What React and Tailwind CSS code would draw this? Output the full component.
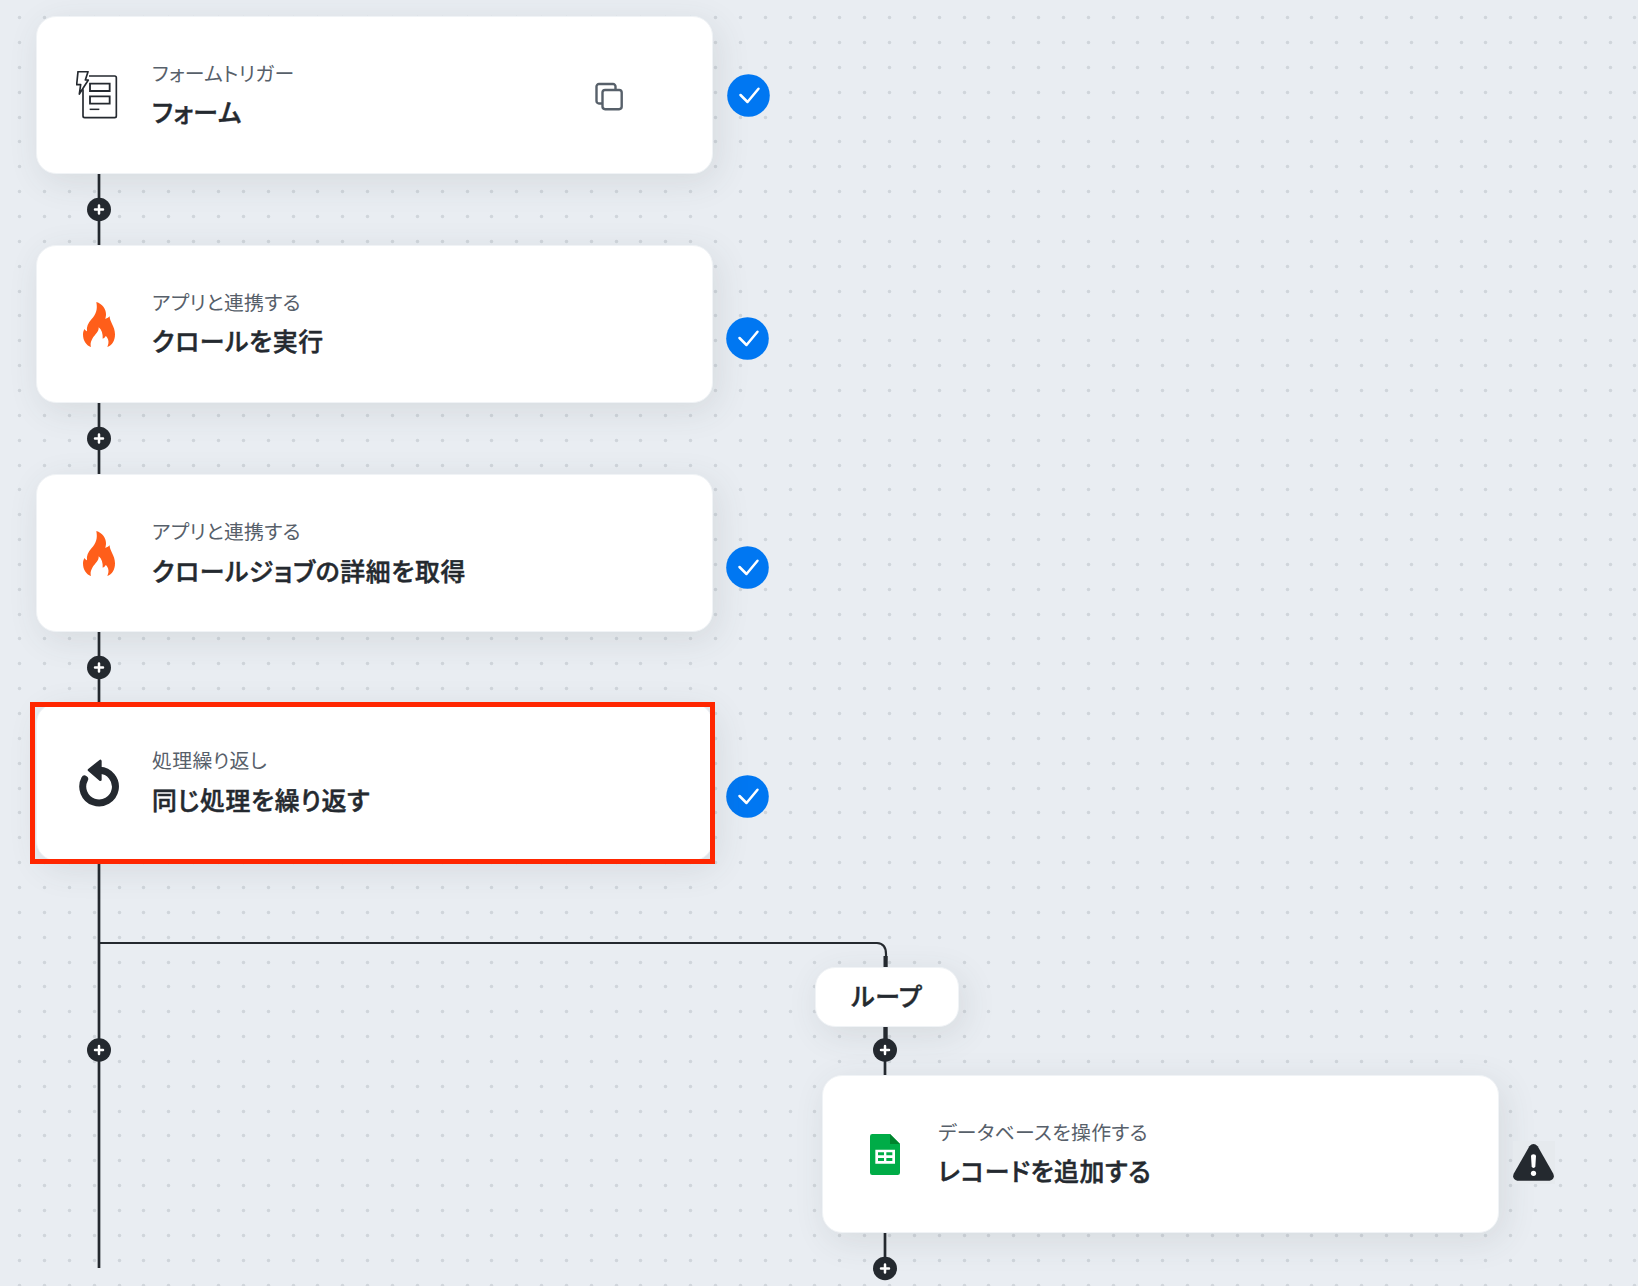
import clsx from "clsx";

const DOT_GAP = 24.85;

// Dots snap to whole pixels so every one of them stays crisp
const dotPath = () => {
  let d = "";
  for (let row = 0; row < 52; row++) {
    for (let col = 0; col < 66; col++) {
      const x = Math.round(19.2 + col * DOT_GAP) + 0.5;
      const y = Math.round(17.2 + row * DOT_GAP) + 0.5;
      d += `M${x} ${y}h.01`;
    }
  }
  return d;
};

const DotGrid = () => (
  <svg className="absolute inset-0 h-full w-full" aria-hidden="true">
    <path d={dotPath()} stroke="#d0d5db" strokeWidth="3.600" strokeLinecap="round" />
  </svg>
);

const FormIcon = () => (
  <svg
    className="-mt-0.5 -ml-1"
    width="42"
    height="48"
    viewBox="229 213 126 144"
    fill="none"
    stroke="#24292f"
    strokeWidth="5"
  >
    <path d="M268 228H345Q350 228 350 233V348Q350 353 345 353H255Q250 353 250 348V268" />
    <path d="M271 251H330V273H271ZM271 289H330V311H271Z" strokeWidth="5.500" />
    <path d="M270 328H299" strokeWidth="4.500" />
    <path d="M235 215H265L257 240H266L239 282L243 254H231Z" strokeLinejoin="round" />
  </svg>
);

const FlameIcon = () => (
  <svg width="32" height="45" viewBox="249 216 96 135" fill="#ff5e1a">
    <path d="M289 216C307 222 318 236 318 252C318 258 317 262 316 267C322 265 326 262 329 259C328 273 345 290 345 313C345 333 336 346 322 351C325 344 327 336 324 328C322 323 320 320 317 318C315 322 312 325 308 326C309 312 305 299 296 292C297 306 285 313 277 326C271 336 271 344 273 351C258 346 249 332 249 313C249 306 251 300 254 297C256 301 258 303 261 304C259 290 264 279 275 267C289 252 293 238 289 216Z" />
  </svg>
);

const LoopIcon = () => (
  <svg width="40" height="48" viewBox="237 237 120 144" fill="none" stroke="#24292f">
    <path d="M254 297A49 49 0 1 0 299 271" strokeWidth="21" strokeLinecap="round" />
    <path d="M267 270L301 243V299Z" fill="#24292f" strokeWidth="8" strokeLinejoin="round" />
  </svg>
);

const SheetIcon = () => (
  <svg width="30" height="41" viewBox="210 222 90 123">
    <path
      d="M217 222H270L300 252V338Q300 345 293 345H217Q210 345 210 338V229Q210 222 217 222Z"
      fill="#00ac47"
    />
    <path d="M270 222L300 252H270Z" fill="#00832d" />
    <path
      d="M226 269H285V311H226ZM234 277V286H252V277ZM259 277V286H277V277ZM234 294V303H252V294ZM259 294V303H277V294Z"
      fill="#fff"
      fillRule="evenodd"
    />
  </svg>
);

const CopyIcon = () => (
  <svg
    className="mt-1"
    width="30"
    height="30"
    viewBox="0 0 30 30"
    fill="none"
    stroke="#57606a"
    strokeWidth="2.400"
  >
    <path d="M8 21.500H5A2.500 2.500 0 0 1 2.500 19V4.500A2.500 2.500 0 0 1 5 2H19A2.500 2.500 0 0 1 21.500 4.500V8" />
    <rect x="8.500" y="8" width="19.200" height="19.200" rx="2.600" />
  </svg>
);

const CheckBadge = ({ className }) => (
  <svg className={clsx("relative shrink-0", className)} width="43" height="43" viewBox="-21.500 -21.500 43 43">
    <circle r="21.300" fill="#0077f2" />
    <path
      d="M-8 -.5L-1 6.500L10 -6.800"
      fill="none"
      stroke="#fff"
      strokeWidth="2.500"
      strokeLinecap="round"
      strokeLinejoin="round"
    />
  </svg>
);

const WarningIcon = () => (
  <svg className="relative mt-[17px] ml-3.5" width="42" height="43" viewBox="219 243 126 129">
    <rect x="219" y="243" width="126" height="129" fill="#e6eaee" />
    <path d="M268 259Q280.500 245 293 259L340 341Q346 358 329 362.500H232Q215 358 221 341Z" fill="#24292f" />
    <path d="M273 288Q273 283 280.500 283Q288 283 288 288L286 319Q285 324 280.500 324Q276 324 275 319Z" fill="#fff" />
    <circle cx="280.500" cy="340" r="7.800" fill="#fff" />
  </svg>
);

// Vertical line with an add-step button drawn on top of it
const Connector = ({ className, height, buttonY, lineEnd = height, thickUntil = 0 }) => (
  <svg className={clsx("relative shrink-0", className)} width="24" height={height}>
    <path d={`M12 0V${lineEnd}`} stroke="#24292f" strokeWidth="2.700" />
    {thickUntil > 0 && <path d={`M12.600 0V${thickUntil}`} stroke="#24292f" strokeWidth="4.200" />}
    <ellipse cx="12" cy={buttonY} rx="12" ry="11.700" fill="#24292f" />
    <path
      d={`M8 ${buttonY}H16M12 ${buttonY - 4}V${buttonY + 4}`}
      stroke="#fff"
      strokeWidth="2.500"
      strokeLinecap="round"
    />
  </svg>
);

const NodeCard = ({ icon: Icon, label, title, action, selected }) => (
  <div
    className={clsx(
      "relative flex h-[158px] w-[677px] shrink-0 rounded-[20px] border border-[#f0f3f6] bg-white shadow-[5px_8px_34px_rgba(60,75,75,0.11)]",
      selected && "z-10"
    )}
  >
    <div className="flex w-[124px] items-center justify-center pt-px">
      <Icon />
    </div>
    <div className="-ml-[9px] flex flex-1 flex-col pt-[41px]">
      <p className="text-[19.88px] leading-[30px] tracking-[0.35px] text-[#57606a]">{label}</p>
      <p className="mt-[3.350px] text-[24.85px] leading-[40px] font-medium tracking-[0.7px] text-[#24292f] [-webkit-text-stroke:0.5px_#24292f]">
        {title}
      </p>
    </div>
    {action && <div className="mr-[88px] flex items-center">{action}</div>}
    {selected && (
      <div className="absolute -top-0.5 -left-[7px] h-[162px] w-[685px] border-[5px] border-[#ff2600]" />
    )}
  </div>
);

const steps = [
  { icon: FormIcon, label: "フォームトリガー", title: "フォーム", action: <CopyIcon />, badge: "mt-px ml-3.5" },
  { icon: FlameIcon, label: "アプリと連携する", title: "クロールを実行", badge: "mt-7 ml-[13px]" },
  { icon: FlameIcon, label: "アプリと連携する", title: "クロールジョブの詳細を取得", badge: "mt-7 ml-[13px]" },
  { icon: LoopIcon, label: "処理繰り返し", title: "同じ処理を繰り返す", badge: "mt-7 ml-[13px]", selected: true },
];

const App = () => {
  return (
    <div className="relative h-[1286px] w-[1638px] overflow-hidden bg-[#e9edf2] font-['Noto_Sans_CJK_JP',sans-serif] [font-feature-settings:'palt']">
      <DotGrid />

      <div className="relative flex flex-col pt-4 pl-9">
        {steps.map(({ badge, ...step }, index) => (
          <div key={step.title} className="flex flex-col">
            <div className="flex items-center">
              <NodeCard {...step} />
              <CheckBadge className={badge} />
            </div>
            {index < steps.length - 1 && <Connector className="ml-[51px]" height={71.1} buttonY={35.5} />}
          </div>
        ))}

        <div className="flex items-start">
          <Connector className="ml-[51px]" height={424} buttonY={189} lineEnd={407} />

          {/* Loop branch */}
          <div className="ml-[704px] flex flex-col">
            <svg className="relative -ml-[716px] shrink-0" width="790" height="105.700" fill="none" stroke="#24292f">
              <path d="M1 82H778Q787 82.500 787 93V99" strokeWidth="2.200" />
              <path d="M786.600 95V106" strokeWidth="4.200" />
            </svg>
            <div className="flex h-[60px] w-[144px] items-center justify-center rounded-[20px] border border-[#f0f3f6] bg-white pb-1 shadow-[5px_8px_34px_rgba(60,75,75,0.11)]">
              <span className="text-[24.85px] leading-[36px] font-medium tracking-[0.6px] text-[#24292f] [-webkit-text-stroke:0.5px_#24292f]">
                ループ
              </span>
            </div>
            <Connector className="ml-[58px]" height={48} buttonY={23} thickUntil={14} />
            <div className="ml-[7px] flex items-center">
              <NodeCard icon={SheetIcon} label="データベースを操作する" title="レコードを追加する" />
              <WarningIcon />
            </div>
            <Connector className="ml-[58px]" height={53} buttonY={35.5} lineEnd={36} />
          </div>
        </div>
      </div>
    </div>
  );
};

export default App;
